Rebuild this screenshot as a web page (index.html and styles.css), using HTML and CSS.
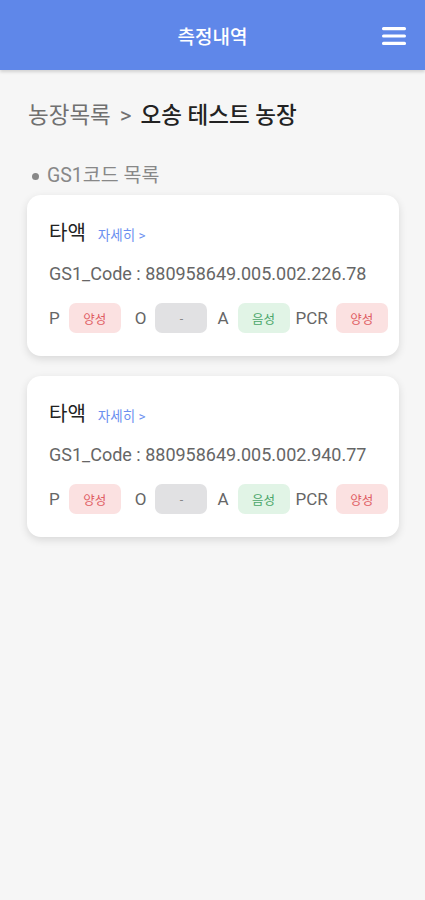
FILE: index.html
```html
<!DOCTYPE html>
<html lang="ko">
<head>
    <meta charset="UTF-8">
    <meta name="viewport" content="width=device-width, initial-scale=1.0">
    <title>측정내역</title>
    <link rel="stylesheet" href="styles.css">
</head>
<body>
    <header class="topbar">
        <h1>측정내역</h1>
        <button class="menu-btn" aria-label="메뉴">
            <svg width="24" height="20" viewBox="0 0 24 20">
                <rect x="0" y="1" width="24" height="3.2" rx="1.5" fill="#fff"/>
                <rect x="0" y="8.4" width="24" height="3.2" rx="1.5" fill="#fff"/>
                <rect x="0" y="15.8" width="24" height="3.2" rx="1.5" fill="#fff"/>
            </svg>
        </button>
    </header>

    <main class="content">
        <div class="breadcrumb">
            <span class="crumb-parent">농장목록</span>
            <span class="crumb-sep">&gt;</span>
            <span class="crumb-current">오송 테스트 농장</span>
        </div>

        <div class="section-title"><span class="dot"></span>GS1코드 목록</div>

        <div class="card">
            <div class="card-head">
                <span class="sample">타액</span>
                <a class="detail" href="#">자세히 &gt;</a>
            </div>
            <div class="code">GS1_Code : 880958649.005.002.226.78</div>
            <div class="results">
                <div class="result"><span class="label">P</span><span class="badge pos">양성</span></div>
                <div class="result"><span class="label">O</span><span class="badge none">-</span></div>
                <div class="result"><span class="label">A</span><span class="badge neg">음성</span></div>
                <div class="result"><span class="label">PCR</span><span class="badge pos">양성</span></div>
            </div>
        </div>

        <div class="card">
            <div class="card-head">
                <span class="sample">타액</span>
                <a class="detail" href="#">자세히 &gt;</a>
            </div>
            <div class="code">GS1_Code : 880958649.005.002.940.77</div>
            <div class="results">
                <div class="result"><span class="label">P</span><span class="badge pos">양성</span></div>
                <div class="result"><span class="label">O</span><span class="badge none">-</span></div>
                <div class="result"><span class="label">A</span><span class="badge neg">음성</span></div>
                <div class="result"><span class="label">PCR</span><span class="badge pos">양성</span></div>
            </div>
        </div>
    </main>
</body>
</html>
```

FILE: styles.css
```css
body {
    margin: 0;
    font-family: Roboto, "Noto Sans CJK KR", sans-serif;
    background-color: #f6f6f6;
    min-height: 900px;
}
.topbar {
    height: 70px;
    background-color: #5f87e9;
    display: flex;
    align-items: center;
    justify-content: center;
    position: relative;
    box-shadow: 0 2px 3px rgba(0,0,0,0.15);
}
.topbar h1 {
    margin: 0;
    color: white;
    font-size: 19px;
    font-weight: 500;
}
.menu-btn {
    position: absolute;
    right: 19px;
    top: 26px;
    background: none;
    border: none;
    padding: 0;
    cursor: pointer;
    line-height: 0;
}
.content {
    padding: 0 26px 0 27px;
}
.breadcrumb {
    margin-top: 30px;
    font-size: 22.5px;
    line-height: 30px;
    display: flex;
    gap: 9px;
    padding-left: 1px;
}
.crumb-parent, .crumb-sep {
    color: #707070;
}
.crumb-current {
    color: #222;
    font-weight: 500;
}
.section-title {
    margin-top: 33px;
    font-size: 19.5px;
    line-height: 26px;
    color: #888;
    display: flex;
    align-items: center;
    padding-left: 5px;
}
.dot {
    width: 7px;
    height: 7px;
    border-radius: 50%;
    background-color: #888;
    margin-right: 8px;
}
.card {
    background-color: white;
    border-radius: 14px;
    box-shadow: 0 3px 8px rgba(0,0,0,0.12);
    padding: 25px 11px 23px 22px;
    margin-top: 6px;
    margin-bottom: 20px;
}
.card + .card {
    margin-top: 0;
}
.card-head {
    display: flex;
    align-items: baseline;
    gap: 12px;
    line-height: 26px;
}
.sample {
    font-size: 20px;
    color: #222;
}
.detail {
    font-size: 13.5px;
    color: #6b8ff0;
    text-decoration: none;
}
.code {
    margin-top: 14px;
    font-size: 18px;
    line-height: 24px;
    color: #666;
}
.results {
    margin-top: 17px;
    display: flex;
    align-items: center;
}
.result {
    display: flex;
    align-items: center;
    gap: 9px;
}
.result:nth-child(2) {
    margin-left: 14px;
}
.result:nth-child(3) {
    margin-left: 10px;
}
.result:nth-child(4) {
    margin-left: 6px;
}
.result:nth-child(4) .label {
    margin-right: -1px;
}
.label {
    font-size: 17px;
    color: #666;
}
.badge {
    width: 52px;
    height: 30px;
    border-radius: 7px;
    font-size: 12.5px;
    display: flex;
    align-items: center;
    justify-content: center;
}
.pos {
    background-color: #fbe1e1;
    color: #e05c63;
}
.none {
    background-color: #e1e1e3;
    color: #888;
}
.neg {
    background-color: #e1f4e6;
    color: #4aa66a;
}
```
